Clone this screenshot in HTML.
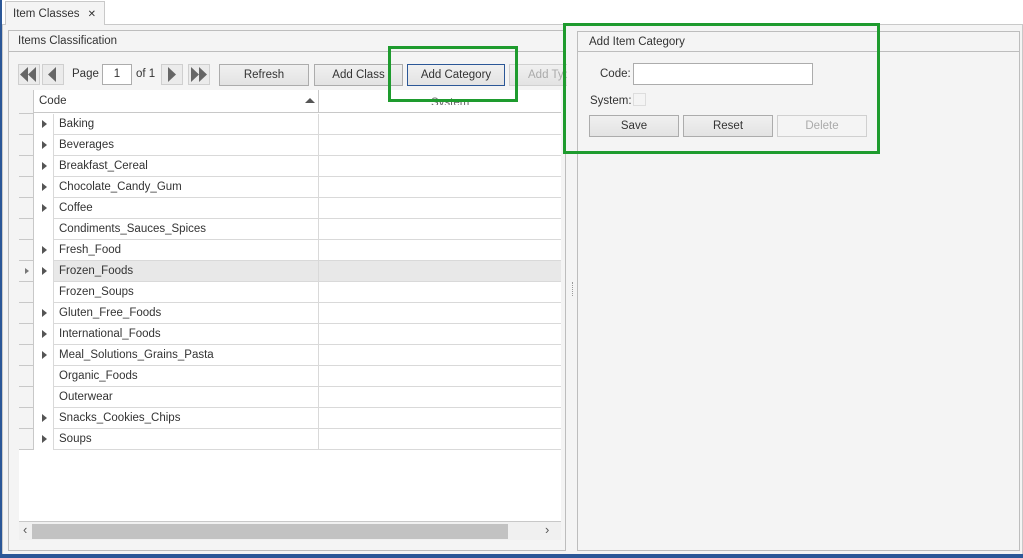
<!DOCTYPE html>
<html><head><style>
*{box-sizing:border-box}
body{margin:0;width:1023px;height:558px;background:#fff;font-family:"Liberation Sans",sans-serif;font-size:11.5px;color:#333;position:relative;overflow:hidden}
.a{position:absolute}
.btn{position:absolute;height:22px;border:1px solid #acacac;background:linear-gradient(#f0f0f0,#e3e3e3);text-align:center;line-height:20px;font-size:11.5px;color:#333}
.nav{position:absolute;top:64px;width:22px;height:21px;border:1px solid #cfcfcf;background:#ebebeb}
.row{position:absolute;left:54px;width:507px;height:21px;border-bottom:1px solid #d9d9d9;line-height:21px}
.row span{position:absolute;left:5px}
.row i{position:absolute;left:264px;top:0;width:1px;height:21px;background:#d9d9d9}
.tri{position:absolute;left:42px;width:0;height:0;border-top:4px solid transparent;border-bottom:4px solid transparent;border-left:5px solid #555}
.ind{position:absolute;left:19px;width:15px;height:1px;background:#c8c8c8}
</style></head><body>
<div class="a" style="left:0;top:0;width:2px;height:558px;background:#2b5797"></div>
<div class="a" style="left:2px;top:24px;width:1021px;height:531px;background:#f4f4f4;border:1px solid #c9c9c9"></div>
<div class="a" style="left:0;top:554px;width:1023px;height:4px;background:#2b5797"></div>
<div class="a" style="left:5px;top:1px;width:100px;height:24px;background:#f4f4f4;border:1px solid #c9c9c9;border-bottom:none;line-height:24px;padding-left:7px">Item Classes <span style="margin-left:5px;font-size:10px">✕</span></div>

<div class="a" style="left:8px;top:30px;width:558px;height:521px;border:1px solid #bdbdbd;background:#f4f4f4"></div>
<div class="a" style="left:8px;top:51px;width:558px;height:1px;background:#bdbdbd"></div>
<div class="a" style="left:18px;top:35px;color:#333">Items Classification</div>

<div class="a" style="left:577px;top:31px;width:443px;height:520px;border:1px solid #bdbdbd"></div>
<div class="a" style="left:577px;top:51px;width:443px;height:1px;background:#bdbdbd"></div>
<div class="a" style="left:589px;top:36px">Add Item Category</div>
<div class="a" style="left:572px;top:282px;width:2px;height:14px;border-left:1px dotted #999"></div>

<!-- toolbar -->
<div class="nav" style="left:18px"><svg width="20" height="19"><path d="M1 9.5 9 2v15zM9 9.5 17 2v15z" fill="#666"/></svg></div>
<div class="nav" style="left:42px"><svg width="20" height="19"><path d="M5 9.5 13 2v15z" fill="#666"/></svg></div>
<div class="a" style="left:72px;top:68px">Page</div>
<div class="a" style="left:102px;top:64px;width:30px;height:21px;background:#fff;border:1px solid #acacac;text-align:center;line-height:19px">1</div>
<div class="a" style="left:136px;top:68px">of 1</div>
<div class="nav" style="left:161px"><svg width="20" height="19"><path d="M6 2 14 9.5 6 17z" fill="#666"/></svg></div>
<div class="nav" style="left:188px"><svg width="20" height="19"><path d="M2 2 10 9.5 2 17zM10 2 18 9.5 10 17z" fill="#666"/></svg></div>
<div class="btn" style="left:219px;top:64px;width:90px">Refresh</div>
<div class="btn" style="left:314px;top:64px;width:89px">Add Class</div>
<div class="btn" style="left:407px;top:64px;width:98px;border-color:#2b5797">Add Category</div>
<div class="a" style="left:509px;top:64px;width:58px;height:22px;overflow:hidden"><div class="btn" style="left:0;top:0;width:90px;color:#aaa;border-color:#d0d0d0;text-align:left;padding-left:18px">Add Type</div></div>

<!-- grid -->
<div class="a" style="left:19px;top:90px;width:542px;height:449px;background:#fff;border-top:1px solid #c8c8c8"></div>
<div class="a" style="left:19px;top:90px;width:15px;height:360px;background:#f4f4f4;border-right:1px solid #c8c8c8"></div>
<div class="a" style="left:34px;top:90px;width:527px;height:23px;border-bottom:1px solid #c8c8c8;background:#fff"></div>
<div class="a" style="left:39px;top:95px">Code</div>
<div class="a" style="left:305px;top:98px;width:0;height:0;border-left:5px solid transparent;border-right:5px solid transparent;border-bottom:5px solid #555"></div>
<div class="a" style="left:318px;top:90px;width:1px;height:23px;background:#c8c8c8"></div>
<div class="a" style="left:431px;top:96px;color:#666;height:9px;overflow:hidden;line-height:14px">System</div>
<div class="a" style="left:53px;top:114px;width:1px;height:336px;background:#d9d9d9"></div>
<div class="ind" style="top:113px"></div>
<div class="row" style="top:114px"><span>Baking</span><i></i></div><div class="tri" style="top:120px"></div><div class="ind" style="top:134px"></div>
<div class="row" style="top:135px"><span>Beverages</span><i></i></div><div class="tri" style="top:141px"></div><div class="ind" style="top:155px"></div>
<div class="row" style="top:156px"><span>Breakfast_Cereal</span><i></i></div><div class="tri" style="top:162px"></div><div class="ind" style="top:176px"></div>
<div class="row" style="top:177px"><span>Chocolate_Candy_Gum</span><i></i></div><div class="tri" style="top:183px"></div><div class="ind" style="top:197px"></div>
<div class="row" style="top:198px"><span>Coffee</span><i></i></div><div class="tri" style="top:204px"></div><div class="ind" style="top:218px"></div>
<div class="row" style="top:219px"><span>Condiments_Sauces_Spices</span><i></i></div><div class="ind" style="top:239px"></div>
<div class="row" style="top:240px"><span>Fresh_Food</span><i></i></div><div class="tri" style="top:246px"></div><div class="ind" style="top:260px"></div>
<div class="row" style="top:261px;background:#e8e8e8"><span>Frozen_Foods</span><i></i></div><div class="tri" style="top:267px"></div><div class="tri" style="top:268px;left:25px;border-left-color:#777;border-width:3px 0 3px 4px"></div><div class="ind" style="top:281px"></div>
<div class="row" style="top:282px"><span>Frozen_Soups</span><i></i></div><div class="ind" style="top:302px"></div>
<div class="row" style="top:303px"><span>Gluten_Free_Foods</span><i></i></div><div class="tri" style="top:309px"></div><div class="ind" style="top:323px"></div>
<div class="row" style="top:324px"><span>International_Foods</span><i></i></div><div class="tri" style="top:330px"></div><div class="ind" style="top:344px"></div>
<div class="row" style="top:345px"><span>Meal_Solutions_Grains_Pasta</span><i></i></div><div class="tri" style="top:351px"></div><div class="ind" style="top:365px"></div>
<div class="row" style="top:366px"><span>Organic_Foods</span><i></i></div><div class="ind" style="top:386px"></div>
<div class="row" style="top:387px"><span>Outerwear</span><i></i></div><div class="ind" style="top:407px"></div>
<div class="row" style="top:408px"><span>Snacks_Cookies_Chips</span><i></i></div><div class="tri" style="top:414px"></div><div class="ind" style="top:428px"></div>
<div class="row" style="top:429px"><span>Soups</span><i></i></div><div class="tri" style="top:435px"></div><div class="ind" style="top:449px"></div>
<div class="a" style="left:19px;top:521px;width:542px;height:19px;background:#f0f0f0;border-top:1px solid #c8c8c8"></div>
<div class="a" style="left:32px;top:524px;width:476px;height:15px;background:#c2c2c2"></div>
<div class="a" style="left:23px;top:522px;font-size:13px;color:#555">‹</div>
<div class="a" style="left:545px;top:522px;font-size:13px;color:#555">›</div>

<!-- right form -->
<div class="a" style="left:600px;top:68px">Code:</div>
<div class="a" style="left:633px;top:63px;width:180px;height:22px;background:#fff;border:1px solid #acacac"></div>
<div class="a" style="left:590px;top:95px">System:</div>
<div class="a" style="left:633px;top:93px;width:13px;height:13px;border:1px solid #ddd;background:#f4f4f4"></div>
<div class="btn" style="left:589px;top:115px;width:90px">Save</div>
<div class="btn" style="left:683px;top:115px;width:90px">Reset</div>
<div class="btn" style="left:777px;top:115px;width:90px;color:#aaa;border-color:#d0d0d0;background:#f4f4f4">Delete</div>

<!-- green highlights -->
<div class="a" style="left:388px;top:46px;width:130px;height:56px;border:3px solid #1e9b2e"></div>
<div class="a" style="left:563px;top:23px;width:317px;height:131px;border:3px solid #1e9b2e"></div>
</body></html>
